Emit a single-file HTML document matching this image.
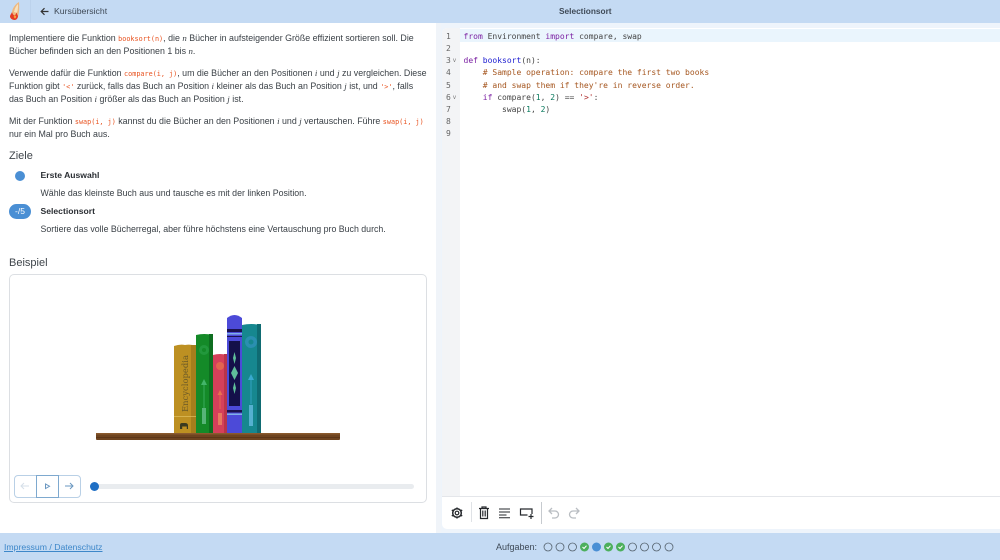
<!DOCTYPE html>
<html lang="de"><head><meta charset="utf-8"><title>Selectionsort</title>
<style>
html,body{margin:0;padding:0}
body{width:1000px;height:560px;overflow:hidden;position:relative;background:#eef4fb;font-family:"Liberation Sans",sans-serif;color:#3a4047}
div,span.a,svg{position:absolute}
.l{position:absolute;left:9px;white-space:nowrap;font-size:8.85px;line-height:12px;color:#3a4046}
code{font-family:"DejaVu Sans Mono",monospace;font-size:6.8px;color:#e8521f}
i{font-family:"Liberation Serif",serif}
.h{position:absolute;left:9px;font-size:11px;line-height:14px;color:#3f454b}
.b{position:absolute;left:40.500px;font-size:8.600px;font-weight:bold;line-height:12px;color:#2a2e33;white-space:nowrap}
.c{position:absolute;left:463.500px;font:8px/12px "DejaVu Sans Mono",monospace;color:#444;white-space:pre}
.n{position:absolute;left:446px;font:8px/12px "DejaVu Sans Mono",monospace;color:#666}
.k{color:#7a1fa2}.f{color:#1a1ad0}.m{color:#a5561f}.d{color:#0a7a5e}.s{color:#b03030}
</style></head><body>
<div style="left:0;top:0;width:1000px;height:23px;background:#c4daf3"></div>
<div style="left:30px;top:0;width:1px;height:23px;background:#bcd2ec"></div>
<svg style="left:8px;top:1px" width="16" height="21" viewBox="0 0 16 21"><path d="M11 1C7.500 3 4.500 7 4 11c-.3 2 0 4 .5 5.500L7 19l3-3c1-3 1.500-9 1-15Z" fill="#eeb880"/><path d="M10 3C8 5 6.500 8 6 11l3 1c.8-3 1.200-6 1-9Z" fill="#f8e2bd"/><path d="M4 11c-.8 2-2 3-2 4.500S4 19 6.500 19 10 16.500 10 15c-1-1.500-1-3-1.500-3.500-.5 1.500-1 2.500-2 3-1.500-.5-2-2-2.500-3.500Z" fill="#e53c25"/><path d="M6 14.500c-.5 1 0 2.500 1 3 1-.5 1.500-1.500 1-3-.5.5-1.500.5-2 0Z" fill="#f8a23a"/></svg>
<svg style="left:40px;top:7px" width="9" height="9" viewBox="0 0 9 9"><path d="M8.500 4.500H1.500M4.500 1.200 1.200 4.500 4.500 7.800" fill="none" stroke="#333" stroke-width="1.200"/></svg>
<div style="left:54px;top:5px;font-size:8.700px;line-height:12px;color:#3f4a57">Kursübersicht</div>
<div style="left:559px;top:5px;font-size:8.300px;font-weight:bold;line-height:12px;color:#3f4a57">Selectionsort</div>

<div style="left:0;top:23px;width:436px;height:510px;background:#fff"></div>

<div class="l" style="top:32px">Implementiere die Funktion <code>booksort(n)</code>, die <i>n</i> Bücher in aufsteigender Größe effizient sortieren soll. Die</div>
<div class="l" style="top:45px">Bücher befinden sich an den Positionen 1 bis <i>n</i>.</div>
<div class="l" style="top:67px">Verwende dafür die Funktion <code>compare(i, j)</code>, um die Bücher an den Positionen <i>i</i> und <i>j</i> zu vergleichen. Diese</div>
<div class="l" style="top:80px">Funktion gibt <code>'&lt;'</code> zurück, falls das Buch an Position <i>i</i> kleiner als das Buch an Position <i>j</i> ist, und <code>'&gt;'</code>, falls</div>
<div class="l" style="top:93px">das Buch an Position <i>i</i> größer als das Buch an Position <i>j</i> ist.</div>
<div class="l" style="top:115px">Mit der Funktion <code>swap(i, j)</code> kannst du die Bücher an den Positionen <i>i</i> und <i>j</i> vertauschen. Führe <code>swap(i, j)</code></div>
<div class="l" style="top:128px">nur ein Mal pro Buch aus.</div>

<div class="h" style="top:149px">Ziele</div>
<div style="left:15px;top:171px;width:10px;height:10px;border-radius:50%;background:#4a8fd4"></div>
<div class="b" style="top:169px">Erste Auswahl</div>
<div class="l" style="left:40.500px;top:187px;font-size:8.800px">Wähle das kleinste Buch aus und tausche es mit der linken Position.</div>
<div style="left:9px;top:204px;width:22px;height:15px;border-radius:8px;background:#4a8fd4;color:#fff;font-size:8.500px;line-height:15px;text-align:center">-/5</div>
<div class="b" style="top:205px">Selectionsort</div>
<div class="l" style="left:40.500px;top:223px;font-size:8.800px">Sortiere das volle Bücherregal, aber führe höchstens eine Vertauschung pro Buch durch.</div>
<div class="h" style="top:256px">Beispiel</div>

<div style="left:8.500px;top:273.500px;width:416px;height:227px;border:1px solid #dcdfe3;border-radius:5px;background:#fff"></div>

<svg style="left:90px;top:310px" width="256" height="134" viewBox="90 310 256 134">
<path d="M174 346Q180 344 185 345Q191 344 196 346V433H174Z" fill="#bd9022"/>
<rect x="191" y="345" width="5" height="88" fill="#a67e1c"/>
<rect x="174" y="416" width="22" height=".7" fill="#e0c060"/>
<path d="M180 429v-4q0-2 2-2h3q3 0 3 2.500v3.500h-1.200v-2.500h-4.600v2.500Z" fill="#3a3a20"/>
<text transform="translate(188 412) rotate(-90)" font-family="DejaVu Serif,serif" font-size="8.400" textLength="57" fill="#6b5a28">Encyclopedia</text>
<path d="M196 335Q204 333 213 335V433H196Z" fill="#148a28"/>
<rect x="209" y="334" width="4" height="99" fill="#0e6e20"/>
<circle cx="204" cy="350" r="5" fill="#22983c"/><circle cx="204" cy="350" r="2" fill="#148a28"/>
<path d="M204 379l-3 6h6Z" fill="#43b56a"/><rect x="203.600" y="385" width=".8" height="23" fill="#43b56a"/><rect x="202" y="408" width="4" height="16" fill="#57b478"/>
<path d="M213 355Q220 353 227 355V433H213Z" fill="#d5405a"/>
<rect x="224" y="354" width="3" height="79" fill="#b8344a"/>
<circle cx="220" cy="366" r="4" fill="#e2654f"/>
<path d="M220 390l-2.500 5h5Z" fill="#ea7050"/><rect x="219.600" y="395" width=".8" height="14" fill="#ea7050"/><rect x="218" y="413" width="4" height="12" fill="#e87a60"/>
<path d="M227 318Q234.500 312 242 318V433H227Z" fill="#4c4ad8"/>
<rect x="227" y="329" width="15" height="3" fill="#1b1250"/>
<rect x="227" y="333" width="15" height="1.500" fill="#7fb0e8"/>
<rect x="227" y="336" width="15" height="1" fill="#1b1250"/>
<rect x="229" y="341" width="11" height="65" fill="#14104a"/>
<path d="M234.500 352l1.500 6-1.500 6-1.500-6ZM234.500 366l3.500 7-3.500 7-3.500-7ZM234.500 382l1.500 6-1.500 6-1.500-6Z" fill="#5fbf9a"/>
<rect x="227" y="410" width="15" height="2.500" fill="#1b1250"/>
<rect x="227" y="413.500" width="15" height="1.500" fill="#7fb0e8"/>
<path d="M242 325Q251 323 261 325V433H242Z" fill="#16878f"/>
<rect x="257" y="324" width="4" height="109" fill="#0f6b72"/>
<circle cx="251" cy="342" r="6" fill="#2a8fb0"/><circle cx="251" cy="342" r="2.500" fill="#16878f"/>
<path d="M251 374l-3 6h6Z" fill="#39a8cf"/><rect x="250.600" y="380" width=".8" height="24" fill="#39a8cf"/><rect x="249" y="405" width="4" height="21" fill="#55b0d0"/>
<rect x="96" y="433" width="244" height="7" rx="1" fill="#6e4420"/>
<rect x="96" y="433" width="244" height="1.500" fill="#8a5a2e"/>
<rect x="96" y="437" width="244" height="1" fill="#5c3618"/>
</svg>

<div style="left:13.500px;top:474.500px;width:65px;height:21px;border:1px solid #b9d0e6;border-radius:4px;background:#fff"></div>
<div style="left:36px;top:474.500px;width:21px;height:21px;border:1px solid #7ea9cf;background:#fff"></div>
<svg style="left:13px;top:474px" width="68" height="24" viewBox="13 474 68 24">
<path d="M29 486H21M24 483 21 486 24 489" fill="none" stroke="#d5dfe8" stroke-width="1"/>
<path d="M45.500 484v4.500l4-2.250Z" fill="none" stroke="#6a97c0" stroke-width="1"/>
<path d="M65 486H73M70 483 73 486 70 489" fill="none" stroke="#6a97c0" stroke-width="1"/>
</svg>
<div style="left:94px;top:484px;width:320px;height:5px;border-radius:3px;background:#e9ecef"></div>
<div style="left:89.500px;top:482px;width:9px;height:9px;border-radius:50%;background:#1f6fc4"></div>

<div style="left:436px;top:23px;width:5px;height:510px;background:#f0f4f9"></div>
<div style="left:441.500px;top:28px;width:559px;height:501px;background:#fff;border-radius:5px 0 0 5px"></div>
<div style="left:441.500px;top:28px;width:18.500px;height:468px;background:#f3f4f6;border-radius:5px 0 0 0"></div>
<div style="left:460px;top:29px;width:540px;height:13px;background:#eaf5fd"></div>
<div style="left:441.500px;top:496px;width:559px;height:1px;background:#e4e6ea"></div>

<div class="n" style="top:31px">1</div><div class="n" style="top:43px">2</div><div class="n" style="top:55px">3</div><div class="n" style="top:67px">4</div><div class="n" style="top:80px">5</div><div class="n" style="top:92px">6</div><div class="n" style="top:104px">7</div><div class="n" style="top:116px">8</div><div class="n" style="top:128px">9</div>
<div style="left:453px;top:58px;font-size:6px;color:#777">v</div><div style="left:453px;top:95px;font-size:6px;color:#777">v</div>

<div class="c" style="top:31px"><span class="k">from</span> Environment <span class="k">import</span> compare, swap</div>
<div class="c" style="top:55px"><span class="k">def</span> <span class="f">booksort</span>(n):</div>
<div class="c m" style="top:67px">    # Sample operation: compare the first two books</div>
<div class="c m" style="top:80px">    # and swap them if they're in reverse order.</div>
<div class="c" style="top:92px">    <span class="k">if</span> compare(<span class="d">1</span>, <span class="d">2</span>) == <span class="s">'&gt;'</span>:</div>
<div class="c" style="top:104px">        swap(<span class="d">1</span>, <span class="d">2</span>)</div>

<svg style="left:448px;top:504px" width="132" height="20" viewBox="448 504 132 20" fill="none" stroke="#26292d" stroke-width="1.300">
<circle cx="457" cy="513" r="1.800" stroke-width="1.200"/><circle cx="457" cy="513" r="4.300" stroke-width="1.500"/>
<path d="M457 507.500v1.500M457 517v1.500M451.800 510l1.300.8M460.900 515.200l1.300.8M451.800 516l1.300-.8M460.900 510.800l1.300-.8" stroke-width="1.400"/>
<path d="M479 508.500h10M482 508.500v-1.500h4v1.500M480.500 508.500v10h7v-10M482.800 510.500v6M485.200 510.500v6" stroke-width="1.200"/>
<path d="M499 509h11M499 512h11M499 515h7.500M499 517.800h11" stroke-width="1"/>
<path d="M532 514v-5h-11.500v6h7M528.500 516.500h5M531 514v5" stroke-width="1.200"/>
<path d="M552 508l-3 3 3 3M549 511h6a3.500 3.500 0 0 1 0 7h-3" stroke="#b9bdc2"/>
<path d="M576 508l3 3-3 3M579 511h-6a3.500 3.500 0 0 0 0 7h3" stroke="#b9bdc2"/>
</svg>
<div style="left:470.500px;top:502px;width:.8px;height:20px;background:#dfe2e6"></div>
<div style="left:541px;top:502px;width:1px;height:22px;background:#c6cacf"></div>

<div style="left:0;top:533px;width:1000px;height:27px;background:#c4daf3"></div>
<div style="left:4px;top:541px;font-size:8.700px;line-height:12px;color:#3d87c9;text-decoration:underline">Impressum / Datenschutz</div>
<div style="left:496px;top:541px;font-size:9px;line-height:12px;color:#3f4a57">Aufgaben:</div>
<svg style="left:540px;top:538px" width="140" height="18" viewBox="540 538 140 18">
<g fill="none" stroke="#56636f" stroke-width=".8">
<circle cx="548" cy="547" r="4"/><circle cx="560" cy="547" r="4"/><circle cx="572.500" cy="547" r="4"/>
<circle cx="632.500" cy="547" r="4"/><circle cx="644.500" cy="547" r="4"/><circle cx="656.500" cy="547" r="4"/><circle cx="669" cy="547" r="4"/>
</g>
<g fill="#4caf5c"><circle cx="584.500" cy="547" r="4.500"/><circle cx="608.500" cy="547" r="4.500"/><circle cx="620.500" cy="547" r="4.500"/></g>
<circle cx="596.500" cy="547" r="4.500" fill="#4a8fd4"/>
<g fill="none" stroke="#fff" stroke-width="1"><path d="M582.500 547l1.500 1.500 2.500-2.800M606.500 547l1.500 1.500 2.500-2.800M618.500 547l1.500 1.500 2.500-2.800"/></g>
</svg>
</body></html>
